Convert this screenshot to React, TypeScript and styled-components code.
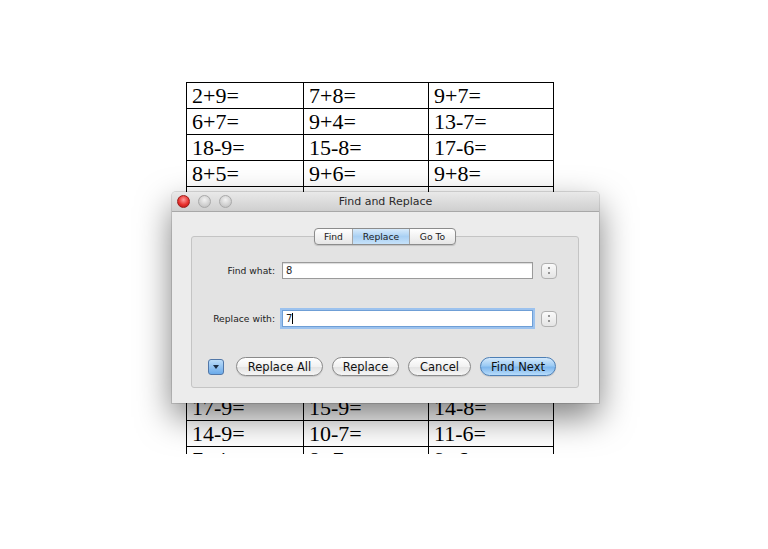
import styled, { createGlobalStyle } from "styled-components";

const GlobalStyle = createGlobalStyle`
    html, body {
        margin: 0;
        padding: 0;
        background: #ffffff;
    }
`

const rows: string[][] = [
    ["2+9=", "7+8=", "9+7="],
    ["6+7=", "9+4=", "13-7="],
    ["18-9=", "15-8=", "17-6="],
    ["8+5=", "9+6=", "9+8="],
    ["14-8=", "6+7=", "13-4="],
    ["9+5=", "8+4=", "15-6="],
    ["16-7=", "7+7=", "11-3="],
    ["5+8=", "12-5=", "9+9="],
    ["13-6=", "8+8=", "16-9="],
    ["7+6=", "14-7=", "6+9="],
    ["11-4=", "9+3=", "12-8="],
    ["8+9=", "13-5=", "7+5="],
    ["17-9=", "15-9=", "14-8="],
    ["14-9=", "10-7=", "11-6="],
    ["7+4=", "8+7=", "9+6="],
]

const Page = styled.div`
    position: relative;
    width: 768px;
    height: 549px;
    overflow: hidden;
    background: #fff;
`
const Sheet = styled.div`
    margin: 82px 0 0 186px;
    width: 368px;
    height: 372px;
    overflow: hidden;
`
const Table = styled.table`
    border-collapse: collapse;
    font-family: "Liberation Serif", "Times New Roman", serif;
    font-size: 22px;
    color: #000;
`
const Cell = styled.td<{ $w: number }>`
    width: ${p => p.$w}px;
    height: 25px;
    padding: 0 0 0 5px;
    border: 1px solid #000;
    line-height: 25px;
    box-sizing: border-box;
    vertical-align: middle;
`

const Window = styled.div`
    position: absolute;
    left: 172px;
    top: 192px;
    width: 427px;
    height: 211px;
    display: flex;
    flex-direction: column;
    background: #ececec;
    border-radius: 4px 4px 0 0;
    box-shadow: 0 14px 34px rgba(0, 0, 0, 0.5), 0 0 0 1px rgba(0, 0, 0, 0.12);
    font-family: "DejaVu Sans", "Noto Sans", sans-serif;
    color: #1e1e1e;
`
const TitleBar = styled.div`
    position: relative;
    height: 20px;
    display: flex;
    align-items: center;
    justify-content: center;
    background: linear-gradient(#e9e9e9, #cfcfcf);
    border-bottom: 1px solid #a8a8a8;
    border-radius: 4px 4px 0 0;
    font-size: 11px;
    color: #2a2a2a;
`
const Lights = styled.div`
    position: absolute;
    left: 5px;
    top: 3px;
    display: flex;
    gap: 8px;
`
const Light = styled.span<{ $red?: boolean }>`
    width: 13px;
    height: 13px;
    border-radius: 50%;
    box-sizing: border-box;
    background: ${p => p.$red
        ? "radial-gradient(circle at 50% 35%, #ff9b9b 0%, #e8322e 55%, #b01010 100%)"
        : "radial-gradient(circle at 50% 35%, #f2f2f2 0%, #d0d0d0 60%, #b8b8b8 100%)"};
    border: 1px solid ${p => (p.$red ? "#9c1d1a" : "#a9a9a9")};
`
const Body = styled.div`
    flex: 1;
    display: flex;
    flex-direction: column;
    padding: 24px 20px 15px 19px;
`
const Group = styled.div`
    flex: 1;
    display: flex;
    flex-direction: column;
    background: #e3e3e3;
    border: 1px solid #c4c4c4;
    border-radius: 3px;
    padding-bottom: 11px;
`
const Tabs = styled.div`
    align-self: center;
    display: flex;
    margin-top: -9px;
    height: 15px;
    border: 1px solid #8c8c8c;
    border-radius: 4px;
    overflow: hidden;
    background: linear-gradient(#ffffff, #e6e6e6);
    box-shadow: 0 1px 1px rgba(0, 0, 0, 0.15);
`
const Tab = styled.div<{ $on?: boolean; $w: number }>`
    width: ${p => p.$w}px;
    display: flex;
    align-items: center;
    justify-content: center;
    font-size: 9.2px;
    color: #1a1a1a;
    background: ${p => (p.$on ? "linear-gradient(#d8ebfb, #a9d0f3 50%, #c6e2fa)" : "transparent")};
    border-left: 1px solid #a5a5a5;
    &:first-child {
        border-left: none;
    }
`
const Row = styled.div<{ $top: number }>`
    display: flex;
    align-items: center;
    margin-top: ${p => p.$top}px;
    height: 17px;
`
const Label = styled.div`
    width: 83px;
    text-align: right;
    font-size: 9.2px;
    color: #222;
`
const Input = styled.div<{ $focus?: boolean }>`
    margin-left: 7px;
    width: 251px;
    height: 17px;
    box-sizing: border-box;
    display: flex;
    align-items: center;
    padding-left: 3px;
    font-size: 10px;
    background: #fff;
    border: 1px solid ${p => (p.$focus ? "#6f9fd6" : "#9a9a9a")};
    box-shadow: ${p => (p.$focus ? "0 0 0 2px #9cc2ee" : "inset 0 1px 1px rgba(0,0,0,0.15)")};
`
const Caret = styled.span`
    display: inline-block;
    width: 1px;
    height: 11px;
    background: #000;
`
const Stepper = styled.div`
    margin-left: 8px;
    width: 16px;
    height: 16px;
    box-sizing: border-box;
    border: 1px solid #b0b0b0;
    border-radius: 4px;
    background: linear-gradient(#fafafa, #e4e4e4);
    display: flex;
    flex-direction: column;
    align-items: center;
    justify-content: center;
    gap: 3px;
    &::before, &::after {
        content: "";
        width: 2px;
        height: 2px;
        border-radius: 50%;
        background: #777;
    }
`
const ButtonRow = styled.div`
    display: flex;
    align-items: center;
    margin: 30px 0 0 16px;
    height: 19px;
    gap: 9px;
`
const Disclosure = styled.div`
    width: 16px;
    height: 16px;
    margin-right: 3px;
    box-sizing: border-box;
    border: 1px solid #5177a8;
    border-radius: 3px;
    background: linear-gradient(#bcdcf8, #6aaaea);
    display: flex;
    align-items: center;
    justify-content: center;
    &::after {
        content: "";
        border-left: 3px solid transparent;
        border-right: 3px solid transparent;
        border-top: 4px solid #1b2d44;
    }
`
const Button = styled.div<{ $w: number; $default?: boolean }>`
    width: ${p => p.$w}px;
    height: 19px;
    box-sizing: border-box;
    display: flex;
    align-items: center;
    justify-content: center;
    border-radius: 10px;
    font-size: 11.5px;
    color: #111;
    border: 1px solid ${p => (p.$default ? "#4d7fb5" : "#8a8a8a")};
    background: ${p => p.$default
        ? "linear-gradient(#d4e9fc, #9ccbf4 45%, #7fb7ed 55%, #b7dcfb)"
        : "linear-gradient(#ffffff, #f1f1f1 50%, #e4e4e4 55%, #f5f5f5)"};
    box-shadow: 0 1px 1px rgba(0, 0, 0, 0.12);
`

export default function App() {
    return (
        <Page>
            <GlobalStyle />
            <Sheet>
                <Table>
                    <tbody>
                        {rows.map((r, i) => (
                            <tr key={i}>
                                <Cell $w={117}>{r[0]}</Cell>
                                <Cell $w={125}>{r[1]}</Cell>
                                <Cell $w={125}>{r[2]}</Cell>
                            </tr>
                        ))}
                    </tbody>
                </Table>
            </Sheet>
            <Window>
                <TitleBar>
                    <Lights>
                        <Light $red />
                        <Light />
                        <Light />
                    </Lights>
                    Find and Replace
                </TitleBar>
                <Body>
                    <Group>
                        <Tabs>
                            <Tab $w={37}>Find</Tab>
                            <Tab $w={56} $on>Replace</Tab>
                            <Tab $w={45}>Go To</Tab>
                        </Tabs>
                        <Row $top={17}>
                            <Label>Find what:</Label>
                            <Input>8</Input>
                            <Stepper />
                        </Row>
                        <Row $top={31}>
                            <Label>Replace with:</Label>
                            <Input $focus>7<Caret /></Input>
                            <Stepper />
                        </Row>
                        <ButtonRow>
                            <Disclosure />
                            <Button $w={87}>Replace All</Button>
                            <Button $w={67}>Replace</Button>
                            <Button $w={63}>Cancel</Button>
                            <Button $w={76} $default>Find Next</Button>
                        </ButtonRow>
                    </Group>
                </Body>
            </Window>
        </Page>
    )
}
